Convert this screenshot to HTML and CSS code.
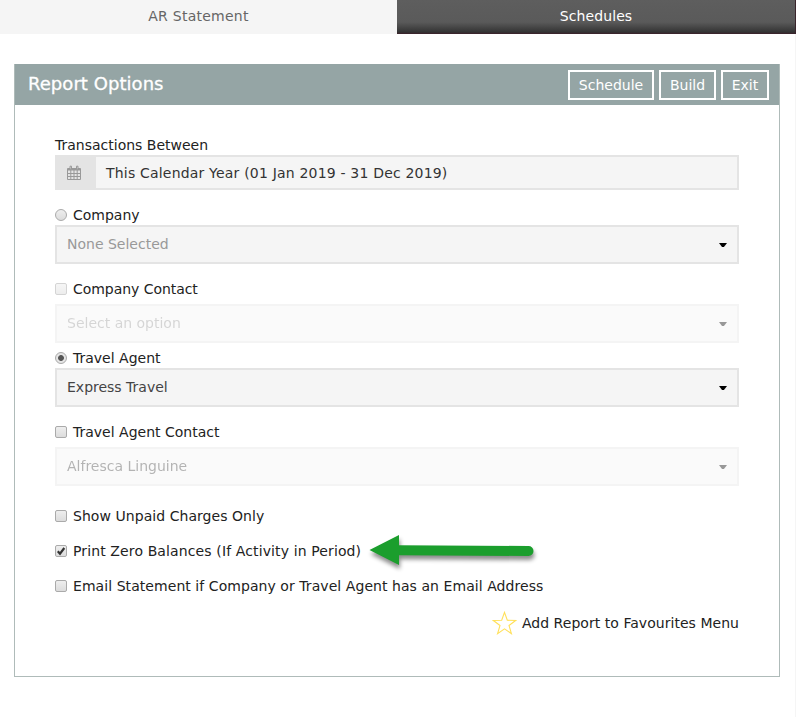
FILE: index.html
```html
<!DOCTYPE html>
<html lang="en">
<head>
<meta charset="utf-8">
<title>AR Statement</title>
<link rel="stylesheet" href="styles.css">
</head>
<body>
<nav class="tabs">
  <a class="tab active">AR Statement</a>
  <a class="tab dark">Schedules</a>
</nav>
<div class="page">
<main class="panel">
  <header class="panel-head">
    <h1>Report Options</h1>
    <div class="actions">
      <button class="btn schedule">Schedule</button>
      <button class="btn build">Build</button>
      <button class="btn exit">Exit</button>
    </div>
  </header>
  <form class="body">
    <div class="label">Transactions Between</div>
    <div class="date">
      <span class="addon">
        <svg width="14" height="15" viewBox="0 0 14 15" fill="none" stroke="#999"><path d="M.5 3.5h13v11H.5z M.5 8.5h13 M.5 11.5h13 M3.8 5v9 M7 5v9 M10.2 5v9"/><path d="M1 4.5h12" stroke-width="2"/><path d="M3 1.2h1.5v3H3z M9.5 1.2H11v3H9.5z" fill="#ddd"/></svg>
      </span>
      <span class="date-text">This Calendar Year (01 Jan 2019 - 31 Dec 2019)</span>
    </div>
    <div class="label group"><i class="radio"></i>Company</div>
    <div class="select placeholder"><span>None Selected</span><i class="caret"></i></div>
    <div class="label group snug"><i class="box faint"></i>Company Contact</div>
    <div class="select placeholder disabled"><span>Select an option</span><i class="caret"></i></div>
    <div class="label near"><i class="radio on"></i>Travel Agent</div>
    <div class="select"><span>Express Travel</span><i class="caret"></i></div>
    <div class="label group"><i class="box"></i>Travel Agent Contact</div>
    <div class="select disabled"><span>Alfresca Linguine</span><i class="caret"></i></div>
    <div class="checks">
      <div class="label unpaid"><i class="box"></i>Show Unpaid Charges Only</div>
      <div class="label zero"><i class="box"><svg width="12" height="12" viewBox="0 0 12 12"><path d="M2.8 6.2 5 8.7 9.3 3" fill="none" stroke="#333" stroke-width="2.2"/></svg></i>Print Zero Balances (If Activity in Period)
        <svg class="arrow" width="180" height="50" viewBox="0 0 180 50"><path d="M4.5 20 34 5v10.3L163.5 16a5 5 0 0 1 0 10L34 25.3V35z" fill="#1b9e2d"/></svg>
      </div>
      <div class="label email"><i class="box"></i>Email Statement if Company or Travel Agent has an Email Address</div>
    </div>
    <div class="favourite">
      <svg width="25" height="25" viewBox="0 0 25 25"><path d="M12.5 1.4 15.3 9.3 23.6 9.5 17 14.5 19.4 22.6 12.5 17.8 5.6 22.6 8 14.5 1.4 9.5 9.7 9.3z" fill="none" stroke="#ffe05a" stroke-width="1.1"/></svg>
      <span>Add Report to Favourites Menu</span>
    </div>
  </form>
</main>
</div>
</body>
</html>
```

FILE: styles.css
```css
* { box-sizing: border-box; }
body {
  margin: 0;
  height: 717px;
  overflow: hidden;
  background: #fff;
  color: #222;
  font: 14px/20px "DejaVu Sans", Verdana, sans-serif;
}
.tabs { display: flex; height: 34px; background: #f5f5f5; }
.tab { flex: 1; text-align: center; line-height: 32px; letter-spacing: .1px; }
.tab.active { flex: 0 0 397px; color: #666; letter-spacing: .25px; }
.tab.dark {
  color: #fff;
  background: linear-gradient(#5e5e5e 0, #5a5a5a 65%, #333 95%, #3a252c 97%);
  border-right: 1px solid #3a252c;
}
.page { height: 683px; padding: 30px 0 0 14px; border-right: 1px solid #f5f5f5; }
.panel {
  width: 766px;
  height: 613px;
  border: 1px solid #afbbb9;
  border-top: 0;
}
.panel-head {
  display: flex;
  justify-content: space-between;
  height: 41px;
  padding: 6px 10px 0 13px;
  background: #95a5a5;
  color: #fff;
}
h1 { margin: 0; font-size: 18px; line-height: 27px; font-weight: 400; letter-spacing: .05px; -webkit-text-stroke: .3px #fff; }
.actions { display: flex; gap: 5px; }
.btn {
  height: 30px;
  padding: 0;
  border: 2px solid #fff;
  background: none;
  color: #fff;
  font: inherit;
}
.schedule { width: 86px; }
.build { width: 57px; }
.exit { width: 48px; }
.body { padding: 30px 40px 0; }
.label { position: relative; display: flex; align-items: center; height: 20px; white-space: nowrap; }
.group { margin-top: 15px; }
.near { margin-top: 5px; }
.snug { letter-spacing: -.05px; }
.unpaid { letter-spacing: .05px; }
.zero { letter-spacing: .12px; }
.email { letter-spacing: .06px; }
.date { display: flex; height: 35px; background: #f5f5f5; border: 2px solid #e4e4e4; }
.addon { display: flex; align-items: center; width: 39px; padding-left: 10px; background: #e4e4e4; }
.date-text { padding-left: 10px; line-height: 33px; color: #333; letter-spacing: .19px; }
.select {
  display: flex;
  align-items: center;
  justify-content: space-between;
  height: 39px;
  padding: 0 10px;
  border: 2px solid #e4e4e4;
  background: #f5f5f5;
  color: #444;
}
.select span { margin-top: -2px; }
.select.placeholder { color: #999; }
.select.disabled { margin-top: 5px; opacity: .4; }
.caret { width: 8px; height: 4px; margin-top: 1px; background: #000; clip-path: polygon(0 0, 100% 0, 62% 100%, 38% 100%); }
.radio, .box {
  display: block;
  width: 12px;
  height: 12px;
  margin-right: 6px;
  border: 1px solid #aaa;
  border-radius: 2px;
  background: linear-gradient(#eee, #dcdcdc);
}
.box.faint { opacity: .5; }
.radio { border-radius: 50%; }
.radio.on { background: radial-gradient(circle, #555 0 2.5px, #e5e5e5 3.3px); }
.box svg { display: block; margin: -1px; }
.checks { display: flex; flex-direction: column; gap: 15px; margin-top: 20px; }
.arrow { position: absolute; left: 310px; top: -11px; filter: drop-shadow(1px 4px 2px rgba(0, 0, 0, .45)); }
.favourite { display: flex; align-items: center; justify-content: flex-end; gap: 5px; height: 25px; margin-top: 15px; }
.favourite span { margin-top: -1px; letter-spacing: .04px; }
```
